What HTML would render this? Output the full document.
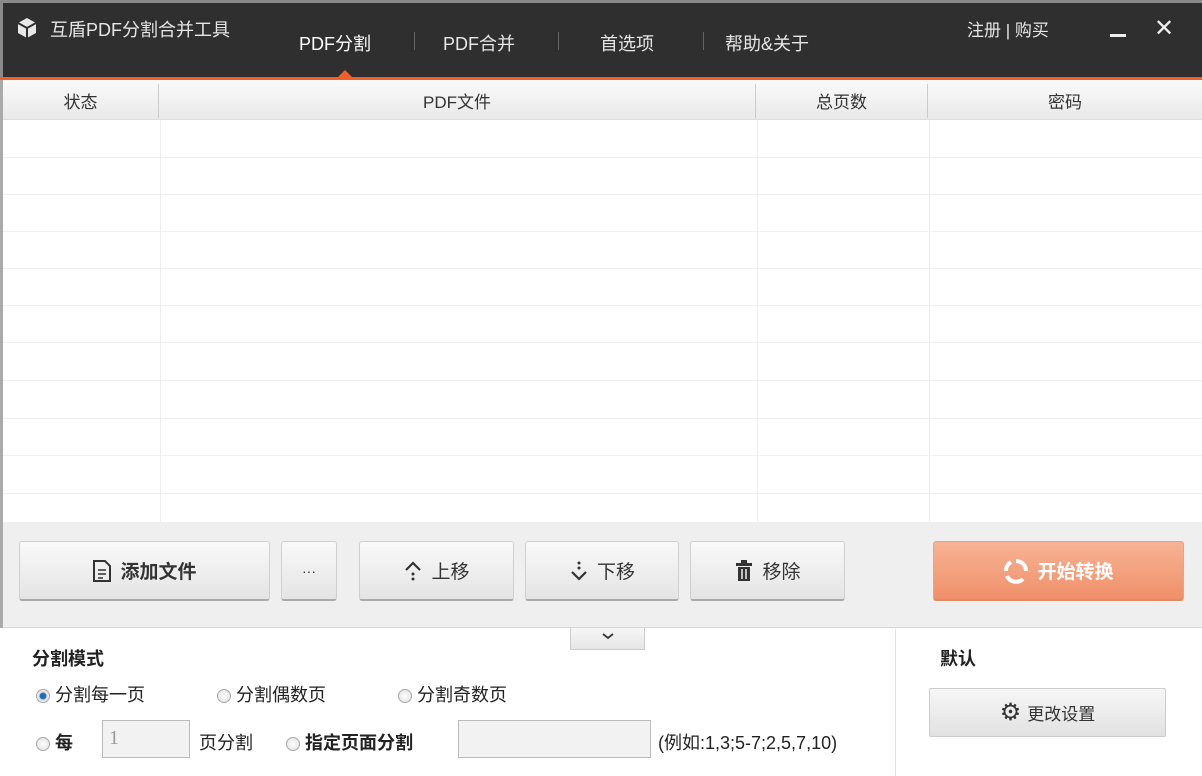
<!DOCTYPE html>
<html><head><meta charset="utf-8">
<style>
*{margin:0;padding:0;box-sizing:border-box}
body{width:1202px;height:776px;overflow:hidden;background:#fff;font-family:"Liberation Sans","Noto Sans CJK SC","WenQuanYi Zen Hei",sans-serif;position:relative;color:#333}
.abs{position:absolute}
#hdr{left:0;top:0;width:1202px;height:78px;background:#2f2f2f;border-top:3px solid #8a8a8a;border-left:3px solid #8a8a8a}
#ol{left:0;top:77px;width:1202px;height:3px;background:#f0602a}
.tab{color:#e6e6e6;font-size:18px;top:30px}
.sep{top:32px;width:1px;height:18px;background:#666}
#th{left:3px;top:80px;width:1199px;height:40px;background:linear-gradient(#fafafa,#e9e9e9);border-bottom:1px solid #ddd}
.thc{top:88px;font-size:17px;color:#333;text-align:center}
.vl{width:1px;background:#eee}
.hl{left:3px;width:1199px;height:1px;background:#f0f0f0}
#bar{left:3px;top:522px;width:1199px;height:106px;background:#efefef;border-bottom:1px solid #d6d6d6}
.btn{top:541px;height:60px;background:linear-gradient(#f9f9f9,#e4e4e4);border:1px solid #d0d0d0;border-bottom:2px solid #aaa;border-radius:3px;font-size:19px;color:#333;display:flex;align-items:center;justify-content:center;gap:8px;font-weight:bold}
.r{width:14px;height:14px;border-radius:50%;border:1px solid #aaa;background:radial-gradient(#fff,#ddd);display:inline-block;vertical-align:middle}
.lbl{font-size:18px;color:#222}
.inp{border:1px solid #bbb;background:#f2f2f2;height:38px}
</style></head><body>
<div id="hdr" class="abs"></div>
<div id="ol" class="abs"></div>
<div class="abs" style="left:338px;top:70px;width:0;height:0;border-left:7px solid transparent;border-right:7px solid transparent;border-bottom:7px solid #f0602a"></div>
<svg class="abs" style="left:16px;top:17px" width="22" height="22" viewBox="0 0 22 22"><path d="M11 1L20 6V16L11 21L2 16V6Z" fill="#e8e8e8"/><path d="M2 6L11 11L20 6M11 11V21" stroke="#2f2f2f" stroke-width="2" fill="none"/></svg>
<div class="abs" style="left:50px;top:16px;color:#e6e6e6;font-size:18px">互盾PDF分割合并工具</div>
<div class="abs tab" style="left:299px;color:#fff">PDF分割</div>
<div class="abs sep" style="left:414px"></div>
<div class="abs tab" style="left:443px">PDF合并</div>
<div class="abs sep" style="left:558px"></div>
<div class="abs tab" style="left:600px">首选项</div>
<div class="abs sep" style="left:703px"></div>
<div class="abs tab" style="left:725px">帮助&amp;关于</div>
<div class="abs" style="left:967px;top:16px;color:#e6e6e6;font-size:17px">注册 | 购买</div>
<div class="abs" style="left:1110px;top:34px;width:16px;height:3px;background:#eee"></div>
<div class="abs" style="left:1154px;top:14px;color:#eee;font-size:24px">✕</div>

<div id="th" class="abs"></div>
<div class="abs" style="left:158px;top:84px;width:1px;height:34px;background:#ccc"></div>
<div class="abs" style="left:755px;top:84px;width:1px;height:34px;background:#ccc"></div>
<div class="abs" style="left:927px;top:84px;width:1px;height:34px;background:#ccc"></div>
<div class="abs thc" style="left:3px;width:155px">状态</div>
<div class="abs thc" style="left:159px;width:596px">PDF文件</div>
<div class="abs thc" style="left:756px;width:171px">总页数</div>
<div class="abs thc" style="left:928px;width:274px">密码</div>
<div class="abs" style="left:0;top:80px;width:3px;height:548px;background:#aaa"></div>
<div class="abs vl" style="left:160px;top:120px;height:402px"></div>
<div class="abs vl" style="left:757px;top:120px;height:402px"></div>
<div class="abs vl" style="left:929px;top:120px;height:402px"></div>
<div class="abs hl" style="top:157px"></div><div class="abs hl" style="top:194px"></div><div class="abs hl" style="top:231px"></div><div class="abs hl" style="top:268px"></div><div class="abs hl" style="top:305px"></div><div class="abs hl" style="top:342px"></div><div class="abs hl" style="top:380px"></div><div class="abs hl" style="top:418px"></div><div class="abs hl" style="top:455px"></div><div class="abs hl" style="top:493px"></div>

<div id="bar" class="abs"></div>
<div class="abs btn" style="left:19px;width:251px"><svg width="20" height="24" viewBox="0 0 20 24"><path d="M2 2H13L18 7V22H2Z" fill="none" stroke="#333" stroke-width="2"/><path d="M6 11H14M6 15H14M6 19H11" stroke="#333" stroke-width="1.6"/></svg>添加文件</div>
<div class="abs btn" style="left:281px;width:56px;font-weight:normal;font-size:14px">···</div>
<div class="abs btn" style="left:359px;width:155px;font-weight:normal"><svg width="20" height="24" viewBox="0 0 20 24"><path d="M3 11L10 4L17 11" fill="none" stroke="#333" stroke-width="2.2"/><circle cx="10" cy="15" r="1.5" fill="#333"/><circle cx="10" cy="20" r="1.5" fill="#333"/></svg>上移</div>
<div class="abs btn" style="left:525px;width:154px;font-weight:normal"><svg width="20" height="24" viewBox="0 0 20 24"><circle cx="10" cy="4" r="1.5" fill="#333"/><circle cx="10" cy="9" r="1.5" fill="#333"/><path d="M3 13L10 20L17 13" fill="none" stroke="#333" stroke-width="2.2"/></svg>下移</div>
<div class="abs btn" style="left:690px;width:155px;font-weight:normal"><svg width="20" height="24" viewBox="0 0 20 24"><rect x="2" y="4" width="16" height="3" fill="#333"/><rect x="7" y="1" width="6" height="3" fill="#333"/><path d="M4 8H16V22H4Z" fill="#333"/><path d="M8 10V20M12 10V20" stroke="#eee" stroke-width="1.5"/></svg>移除</div>
<div class="abs btn" style="left:933px;width:251px;background:linear-gradient(#f7b394,#f0906a);border:1px solid #f0a080;border-bottom:2px solid #e08a68;color:#fff"><svg width="26" height="26" viewBox="0 0 26 26"><path d="M13 3A10 10 0 0 1 23 13" fill="none" stroke="#fff" stroke-width="4"/><path d="M20 21A10 10 0 0 1 4 18" fill="none" stroke="#fff" stroke-width="4"/><path d="M3 13A10 10 0 0 1 8 4" fill="none" stroke="#fff" stroke-width="4"/></svg>开始转换</div>

<div class="abs" style="left:570px;top:628px;width:75px;height:22px;background:linear-gradient(#f6f6f6,#e6e6e6);border:1px solid #ccc;border-top:none;text-align:center"><svg width="14" height="10" viewBox="0 0 14 10"><path d="M2 3L7 7L12 3" fill="none" stroke="#333" stroke-width="1.8"/></svg></div>
<div class="abs" style="left:895px;top:629px;width:1px;height:147px;background:#e2e2e2"></div>
<div class="abs lbl" style="left:32px;top:645px;font-weight:bold">分割模式</div>
<div class="abs lbl" style="left:36px;top:681px"><span class="r" style="background:radial-gradient(#1a6fc0 35%,#ddd 45%,#fff)"></span> 分割每一页</div>
<div class="abs lbl" style="left:217px;top:681px"><span class="r"></span> 分割偶数页</div>
<div class="abs lbl" style="left:398px;top:681px"><span class="r"></span> 分割奇数页</div>
<div class="abs lbl" style="left:36px;top:729px"><span class="r"></span> <b>每</b></div>
<div class="abs inp" style="left:102px;top:720px;width:88px;padding:6px 6px;font-family:'Liberation Serif',serif;font-size:20px;color:#999">1</div>
<div class="abs lbl" style="left:199px;top:729px">页分割</div>
<div class="abs lbl" style="left:286px;top:729px"><span class="r"></span> <b>指定页面分割</b></div>
<div class="abs inp" style="left:458px;top:720px;width:193px"></div>
<div class="abs lbl" style="left:658px;top:729px">(例如:1,3;5-7;2,5,7,10)</div>
<div class="abs lbl" style="left:940px;top:645px;font-weight:bold">默认</div>
<div class="abs" style="left:929px;top:688px;width:237px;height:49px;background:linear-gradient(#f6f6f6,#e2e2e2);border:1px solid #ccc;border-radius:2px;display:flex;align-items:center;justify-content:center;gap:6px;font-size:17px;color:#333"><span style="font-size:24px">⚙</span>更改设置</div>
</body></html>
